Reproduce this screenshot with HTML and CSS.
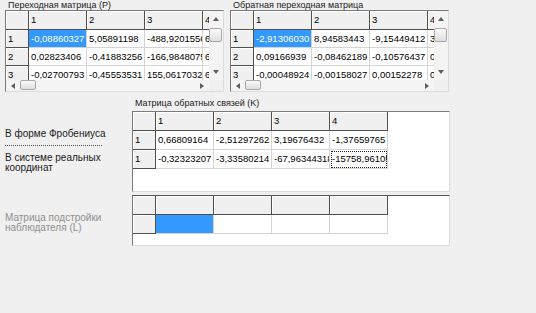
FILE: index.html
```html
<!DOCTYPE html>
<html lang="ru">
<head>
    <meta charset="UTF-8">
    <title>Матрицы</title>
    <link rel="stylesheet" href="styles.css">
</head>
<body>
<div class="form">
    <div class="top-row">
        <div class="matrix">
            <div class="caption">Переходная матрица (P)</div>
            <div class="frame scrolled">
                <div class="view">
                    <div class="sheet tight">
                        <div class="cell fixed"></div><div class="cell fixed">1</div><div class="cell fixed">2</div><div class="cell fixed">3</div><div class="cell fixed">4</div>
                        <div class="cell fixed">1</div><div class="cell sel">-0,08860327</div><div class="cell">5,05891198</div><div class="cell">-488,92015561</div><div class="cell">6</div>
                        <div class="cell fixed">2</div><div class="cell">0,02823406</div><div class="cell">-0,41883256</div><div class="cell">-166,98480759</div><div class="cell">6</div>
                        <div class="cell fixed">3</div><div class="cell">-0,02700793</div><div class="cell">-0,45553531</div><div class="cell">155,06170329</div><div class="cell">6</div>
                    </div>
                </div>
                <div class="vscroll">
                    <span class="btn"><svg width="6" height="4" viewBox="0 0 6 4"><path d="M0 4 L3 0 L6 4 Z" fill="#5f5f5f"/></svg></span>
                    <span class="thumb"></span>
                    <span class="spacer"></span>
                    <span class="btn"><svg width="6" height="4" viewBox="0 0 6 4"><path d="M0 0 L3 4 L6 0 Z" fill="#5f5f5f"/></svg></span>
                </div>
                <div class="hscroll">
                    <span class="btn"><svg width="4" height="6" viewBox="0 0 4 6"><path d="M4 0 L0 3 L4 6 Z" fill="#5f5f5f"/></svg></span>
                    <span class="thumb"></span>
                    <span class="spacer"></span>
                    <span class="btn"><svg width="4" height="6" viewBox="0 0 4 6"><path d="M0 0 L4 3 L0 6 Z" fill="#5f5f5f"/></svg></span>
                </div>
                <div class="corner"></div>
            </div>
        </div>
        <div class="matrix">
            <div class="caption">Обратная переходная матрица</div>
            <div class="frame scrolled">
                <div class="view">
                    <div class="sheet tight">
                        <div class="cell fixed"></div><div class="cell fixed">1</div><div class="cell fixed">2</div><div class="cell fixed">3</div><div class="cell fixed">4</div>
                        <div class="cell fixed">1</div><div class="cell sel">-2,91306030</div><div class="cell">8,94583443</div><div class="cell">-9,15449412</div><div class="cell">3</div>
                        <div class="cell fixed">2</div><div class="cell">0,09166939</div><div class="cell">-0,08462189</div><div class="cell">-0,10576437</div><div class="cell">0</div>
                        <div class="cell fixed">3</div><div class="cell">-0,00048924</div><div class="cell">-0,00158027</div><div class="cell">0,00152278</div><div class="cell">0</div>
                    </div>
                </div>
                <div class="vscroll">
                    <span class="btn"><svg width="6" height="4" viewBox="0 0 6 4"><path d="M0 4 L3 0 L6 4 Z" fill="#5f5f5f"/></svg></span>
                    <span class="thumb"></span>
                    <span class="spacer"></span>
                    <span class="btn"><svg width="6" height="4" viewBox="0 0 6 4"><path d="M0 0 L3 4 L6 0 Z" fill="#5f5f5f"/></svg></span>
                </div>
                <div class="hscroll">
                    <span class="btn"><svg width="4" height="6" viewBox="0 0 4 6"><path d="M4 0 L0 3 L4 6 Z" fill="#5f5f5f"/></svg></span>
                    <span class="thumb"></span>
                    <span class="spacer"></span>
                    <span class="btn"><svg width="4" height="6" viewBox="0 0 4 6"><path d="M0 0 L4 3 L0 6 Z" fill="#5f5f5f"/></svg></span>
                </div>
                <div class="corner"></div>
            </div>
        </div>
    </div>

    <div class="lower">
        <div class="labels">
            <div class="label frob">В форме Фробениуса</div>
            <div class="divider"></div>
            <div class="label">В системе реальных<br>координат</div>
            <div class="label disabled">Матрица подстройки<br>наблюдателя (L)</div>
        </div>
        <div class="grids">
            <div class="caption">Матрица обратных связей (K)</div>
            <div class="frame k-frame">
                <div class="sheet">
                    <div class="cell fixed"></div><div class="cell fixed">1</div><div class="cell fixed">2</div><div class="cell fixed">3</div><div class="cell fixed">4</div>
                    <div class="cell fixed">1</div><div class="cell">0,66809164</div><div class="cell">-2,51297262</div><div class="cell">3,19676432</div><div class="cell">-1,37659765</div>
                    <div class="cell fixed">1</div><div class="cell">-0,32323207</div><div class="cell">-3,33580214</div><div class="cell">-67,96344318</div><div class="cell focus">-15758,96105</div>
                </div>
            </div>
            <div class="frame l-frame">
                <div class="sheet">
                    <div class="cell fixed"></div><div class="cell fixed"></div><div class="cell fixed"></div><div class="cell fixed"></div><div class="cell fixed"></div>
                    <div class="cell fixed"></div><div class="cell sel"></div><div class="cell"></div><div class="cell"></div><div class="cell"></div>
                </div>
            </div>
        </div>
    </div>
</div>
</body>
</html>
```

FILE: styles.css
```css
body {
    margin: 0;
    background-color: #f0f0f0;
    font-family: "Liberation Sans", Arial, sans-serif;
    font-size: 9px;
    color: #000;
}
.form {
    width: 536px;
    height: 313px;
    box-sizing: border-box;
    padding-left: 5px;
    overflow: hidden;
}
.top-row {
    display: flex;
    gap: 6px;
}
.matrix {
    width: 219px;
}
.caption {
    height: 10px;
    line-height: 11px;
    padding-left: 3px;
    font-size: 9px;
    color: #1a1a1a;
}
.frame {
    box-sizing: border-box;
    border-top: 1px solid #7a7a7a;
    border-left: 1px solid #7a7a7a;
    border-right: 1px solid #dcdcdc;
    border-bottom: 1px solid #dcdcdc;
    background-color: #fff;
    overflow: hidden;
}
.frame.scrolled {
    height: 82px;
    display: grid;
    grid-template-columns: 203px 14px;
    grid-template-rows: 69px 11px;
    background-color: #f0f0f0;
}
.view {
    overflow: hidden;
    background-color: #fff;
}
.sheet {
    display: grid;
    grid-template-columns: 23px repeat(4, 58px);
    grid-auto-rows: 19px;
    width: 255px;
}
.sheet.tight {
    grid-auto-rows: 18px;
    grid-template-rows: 19px;
}
.cell {
    box-sizing: border-box;
    border-right: 1px solid #d4d4d4;
    border-bottom: 1px solid #d4d4d4;
    background-color: #fff;
    padding: 0 2px;
    font-size: 9.5px;
    line-height: 17px;
    white-space: nowrap;
    overflow: hidden;
}
.cell.fixed {
    background-color: #f0f0f0;
    border-right-color: #4f4f4f;
    border-bottom-color: #4f4f4f;
    box-shadow: inset 1px 1px 0 #fff;
}
.cell.sel {
    background-color: #3399ff;
    color: #fff;
}
.cell.focus {
    outline: 1px dotted #222;
    outline-offset: -2px;
}

/* scroll bars */
.vscroll, .hscroll {
    display: flex;
    background-color: #f4f4f4;
}
.vscroll {
    flex-direction: column;
}
.vscroll .btn {
    height: 16px;
}
.hscroll .btn {
    width: 14px;
}
.btn {
    display: flex;
    align-items: center;
    justify-content: center;
}
.vscroll .thumb {
    margin: 1px 1px 0 0;
    height: 14px;
}
.hscroll .thumb {
    margin: 0 0 1px 0;
    width: 16px;
}
.thumb {
    box-sizing: border-box;
    border: 1px solid #a8a8a8;
    border-radius: 2px;
    background: linear-gradient(#fafafa, #dedede);
}
.spacer {
    flex: 1;
}
.corner {
    background-color: #f0f0f0;
}

/* lower part */
.lower {
    display: flex;
    margin-top: 6px;
}
.labels {
    width: 127px;
    display: flex;
    flex-direction: column;
}
.label {
    font-size: 10px;
    line-height: 10px;
    color: #1a1a1a;
}
.label.frob {
    margin-top: 31px;
}
.divider {
    width: 97px;
    margin: 6px 0 7px;
    border-top: 1px dotted #555;
}
.label.disabled {
    margin-top: 40px;
    color: #8f8f8f;
}
.grids {
    width: 318px;
}
.k-frame {
    height: 81px;
    margin-top: 3px;
}
.l-frame {
    height: 51px;
    margin-top: 3px;
    border-top-color: #555;
}
```
